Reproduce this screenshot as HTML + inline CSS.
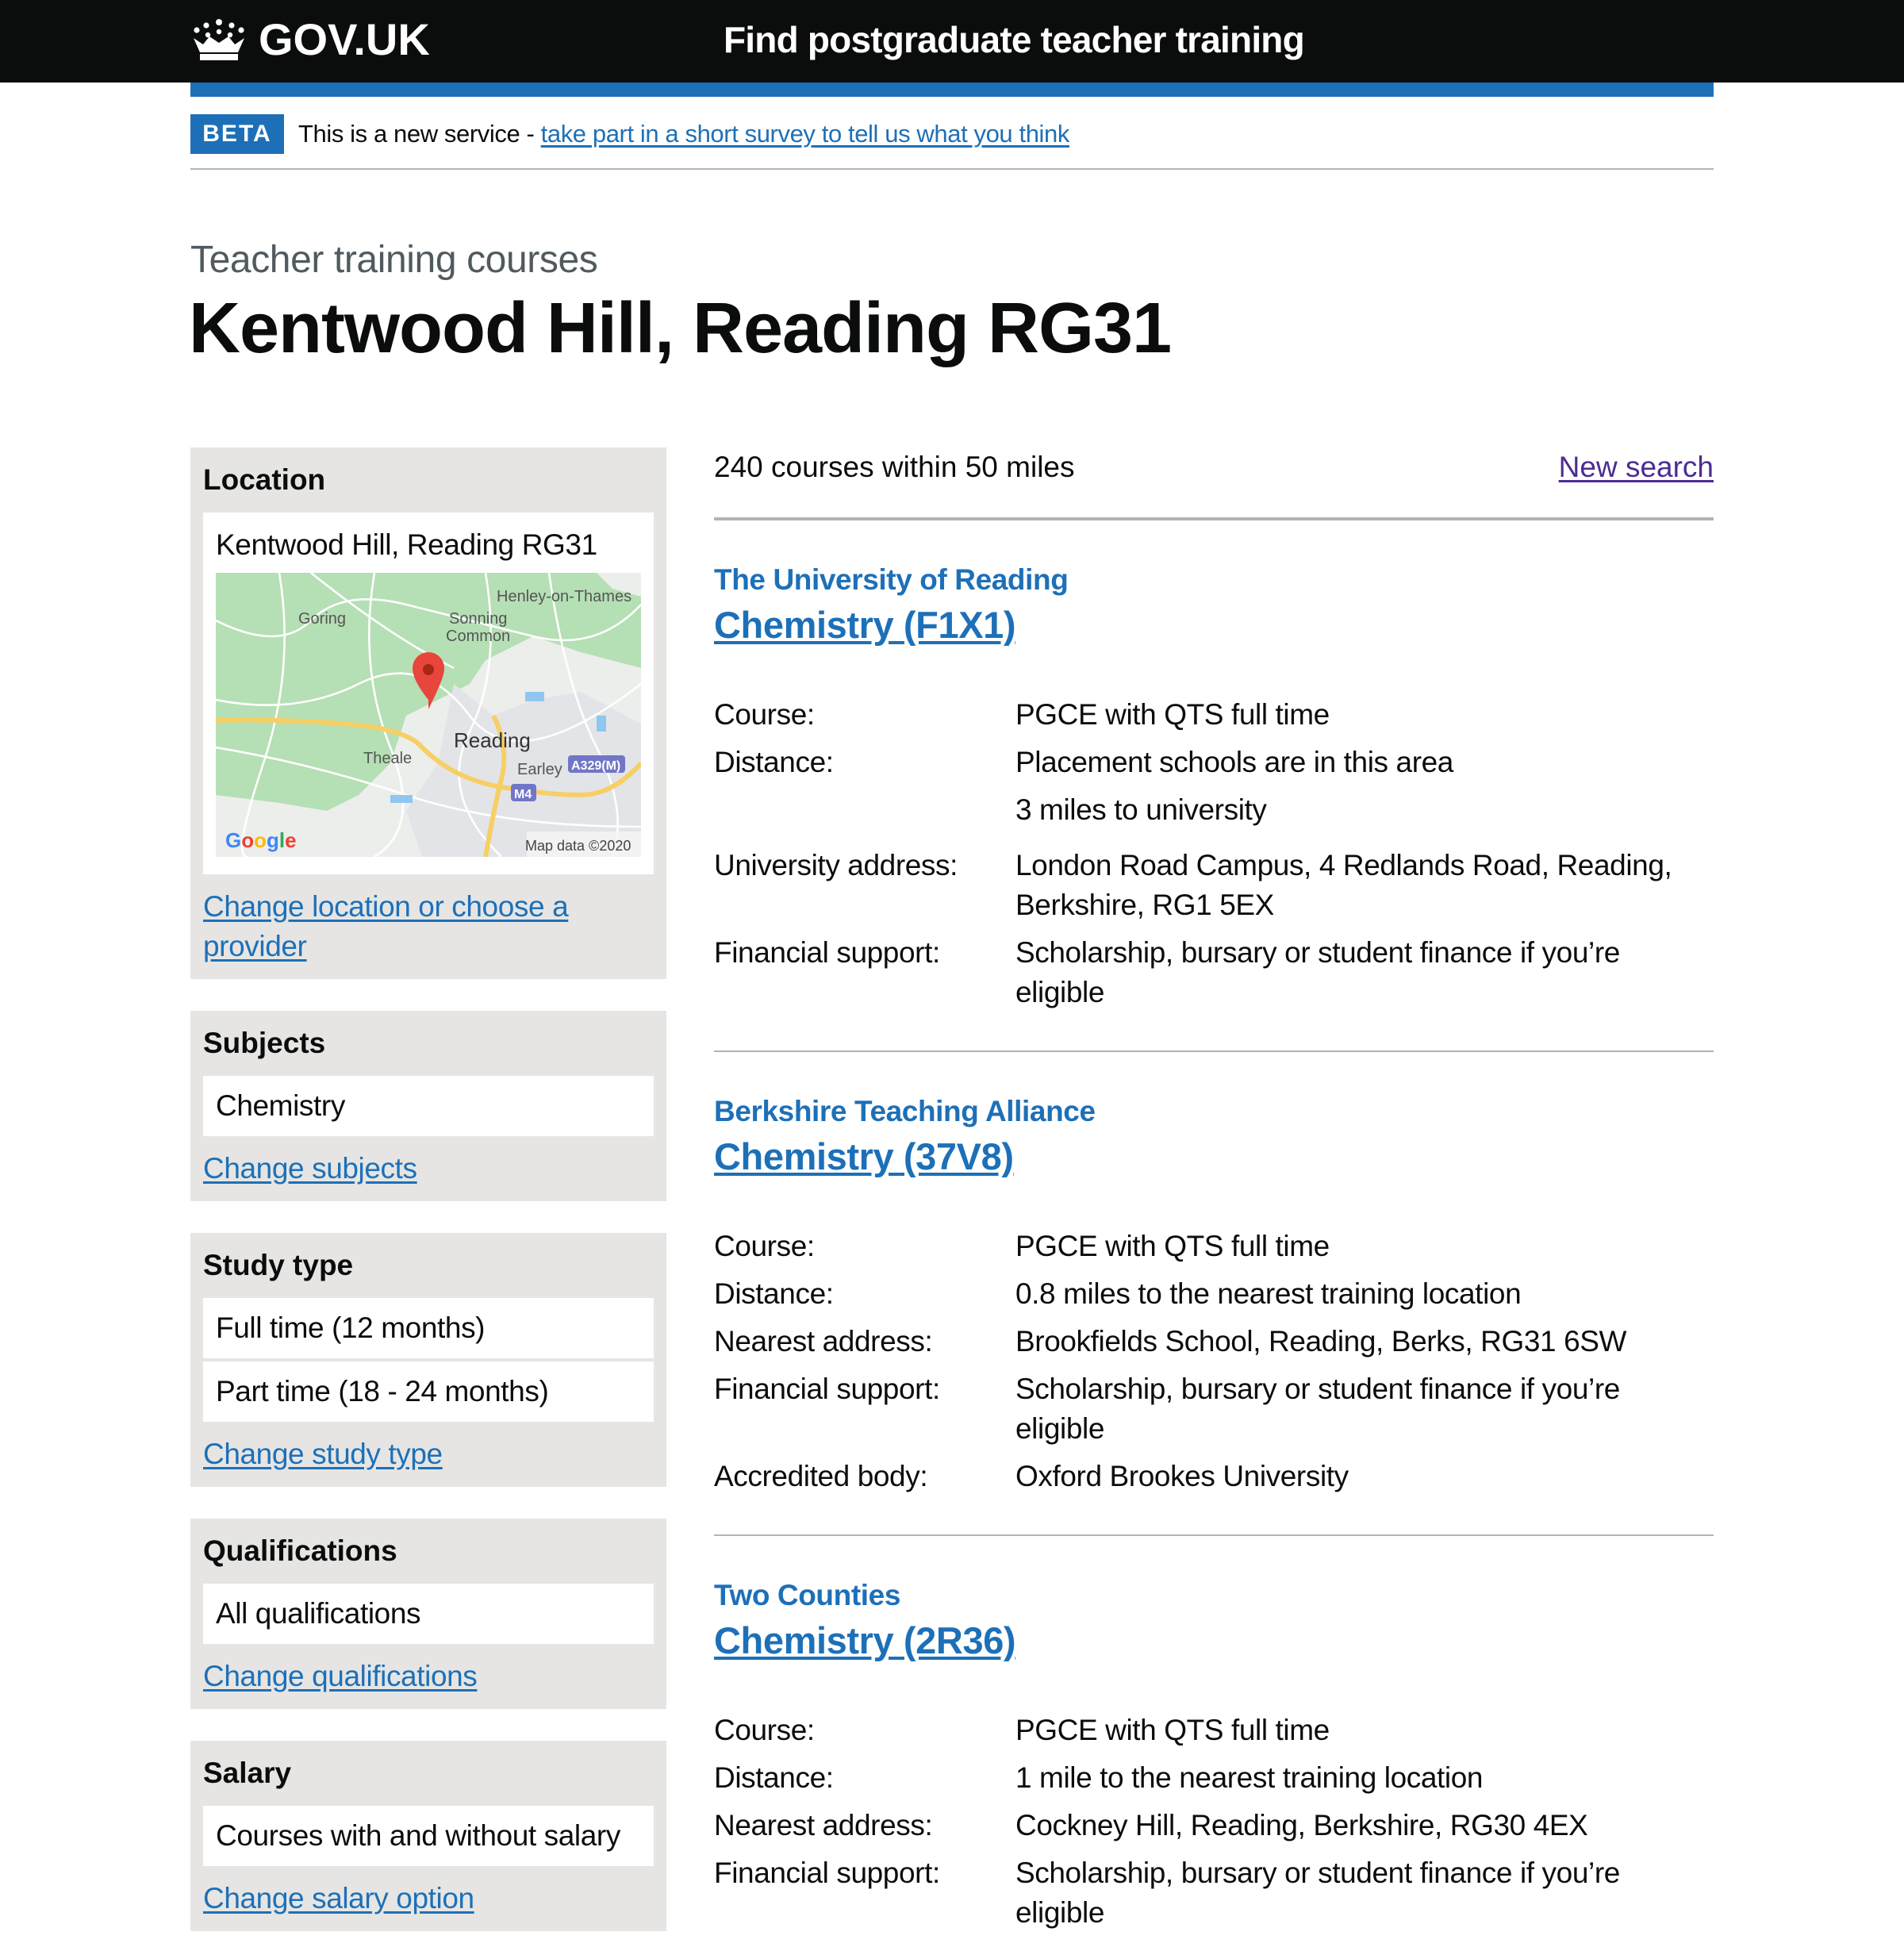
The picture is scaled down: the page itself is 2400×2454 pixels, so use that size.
<!DOCTYPE html>
<html><head><meta charset="utf-8">
<style>
html{zoom:2}
*{box-sizing:border-box;margin:0;padding:0}
body{width:1200px;height:1227px;overflow:hidden;background:#fff;font-family:"Liberation Sans",Arial,sans-serif;color:#0b0c0c;position:relative}
a{color:#1d70b8;text-decoration:underline;text-underline-offset:2px}
.hdr{position:absolute;left:0;top:0;width:1200px;height:52px;background:#0b0c0c}
.logo{position:absolute;left:120px;top:10px;color:#fff;font-weight:bold;font-size:28px;line-height:30px;display:flex;align-items:center}
.logo svg{margin-right:7px}
.svc{position:absolute;left:456px;top:10px;color:#fff;font-weight:bold;font-size:23px;line-height:30px;letter-spacing:-0.4px}
.bar{position:absolute;left:120px;top:52px;width:960px;height:9px;background:#1d70b8}
.beta{position:absolute;left:120px;top:72px;width:960px;height:35px;border-bottom:1px solid #b1b4b6;font-size:15.5px;line-height:25px;letter-spacing:-0.2px}
.tag{display:inline-block;background:#1d70b8;color:#fff;font-weight:bold;font-size:15px;letter-spacing:1px;width:59px;height:25px;text-align:center;line-height:25px;margin-right:9px;vertical-align:top}
.cap{position:absolute;left:120px;top:149px;font-size:24px;line-height:30px;color:#505a5f;letter-spacing:-0.2px}
h1{position:absolute;left:119px;top:180px;font-size:45px;line-height:54px;font-weight:bold;letter-spacing:-0.5px}
.box{position:absolute;left:120px;width:300px;background:#e6e5e3;padding:0 8px}
.box h3{font-size:18.5px;font-weight:bold;line-height:25px;margin-top:8px}
.w{background:#fff;font-size:18.5px;line-height:25px;padding:0 8px;height:38px;display:flex;align-items:center;letter-spacing:-0.2px;white-space:nowrap}
.box a{font-size:18.5px;line-height:25px;display:block;letter-spacing:-0.2px}
.main{position:absolute;left:450px;width:630px}
.top{top:282px;height:45px;border-bottom:1px solid #b1b4b6;font-size:18.5px;line-height:25px}
.res{border-top:1px solid #b1b4b6;position:absolute;left:450px;width:630px}
.prov{color:#1d70b8;font-weight:bold;font-size:18.5px;line-height:25px;margin-top:25px;letter-spacing:-0.2px}
.ttl{font-weight:bold;font-size:23.5px;line-height:30px;margin-top:1px;letter-spacing:-0.2px}
dl{margin-top:29px;font-size:18.5px;line-height:25px;letter-spacing:-0.2px}
.r{display:flex;padding-bottom:5px}
.r dt{width:190px;flex:none}
.r dd p{margin-bottom:5px}
.r dd p:last-child{margin-bottom:0}
</style></head><body>
<div class="hdr">
 <div class="logo"><svg width="36" height="28" viewBox="0 0 36 28" fill="#fff">
  <circle cx="18" cy="3" r="2"/><circle cx="10" cy="5" r="1.8"/><circle cx="26" cy="5" r="1.8"/><circle cx="4" cy="8" r="1.8"/><circle cx="32" cy="8" r="1.8"/>
  <circle cx="18" cy="9" r="1.6"/><circle cx="11" cy="11" r="1.6"/><circle cx="25" cy="11" r="1.6"/>
  <path d="M2 13 L6 22 L30 22 L34 13 L28 17 L24 12 L18 16 L12 12 L8 17 Z"/>
  <rect x="6" y="23" width="24" height="4"/></svg>GOV.UK</div>
 <div class="svc">Find postgraduate teacher training</div>
</div>
<div class="bar"></div>
<div class="beta"><span class="tag">BETA</span>This is a new service - <a href="#">take part in a short survey to tell us what you think</a></div>
<div class="cap">Teacher training courses</div>
<h1>Kentwood Hill, Reading RG31</h1>

<div class="box" style="top:282px;height:335px">
 <h3>Location</h3>
 <div style="background:#fff;margin-top:8px;height:228px;padding:0 8px">
  <div style="font-size:18.5px;line-height:25px;padding-top:8px;height:38px;letter-spacing:-0.2px">Kentwood Hill, Reading RG31</div>
  <svg width="268" height="179" viewBox="0 0 268 179" style="display:block">
   <rect width="268" height="179" fill="#eceeec"/>
   <path d="M0 0 H240 L250 10 L268 15 V60 L230 50 L200 40 L170 55 L160 70 L140 80 L120 90 L110 120 L90 140 L70 150 L40 145 L0 140 Z" fill="#b5dfb5"/>
   <path d="M150 70 L175 90 L200 80 L230 75 L268 95 V179 H130 L120 150 L140 120 Z" fill="#e3e4e8"/>
   <g stroke="#fff" stroke-width="1.3" fill="none">
    <path d="M0 30 Q40 50 60 30 T120 20 T200 40 T268 20"/><path d="M0 80 Q50 90 90 70 T160 90 T268 70"/>
    <path d="M40 0 Q50 60 30 120 T20 179"/><path d="M100 0 Q90 60 110 110 T100 179"/><path d="M170 0 Q180 60 160 100 T180 179"/>
    <path d="M210 0 Q220 70 240 110 T250 179"/><path d="M0 110 Q60 120 120 140 T268 160"/><path d="M60 0 Q110 40 150 60"/>
   </g>
   <path d="M0 93 Q40 92 80 95 T130 110 Q150 130 180 135 T230 140 T268 120" stroke="#f6cf65" stroke-width="3" fill="none"/>
   <path d="M170 179 Q175 150 180 130 T175 90" stroke="#f6cf65" stroke-width="3" fill="none"/>
   <g fill="#90c6ef"><rect x="195" y="75" width="12" height="6"/><rect x="110" y="140" width="14" height="5"/><rect x="240" y="90" width="6" height="10"/></g>
   <path d="M134 80 C126 70 124 64 124 60 A10 10 0 1 1 144 60 C144 64 142 70 134 86 Z" fill="#e8453c"/>
   <circle cx="134" cy="61" r="3.5" fill="#a52714"/>
   <g font-family="Liberation Sans,sans-serif" fill="#555" font-size="10">
    <text x="177" y="18" font-size="10">Henley-on-Thames</text><text x="52" y="32">Goring</text>
    <text x="147" y="32">Sonning</text><text x="145" y="43">Common</text>
    <text x="150" y="110" font-size="13" fill="#333">Reading</text><text x="93" y="120">Theale</text><text x="190" y="127">Earley</text>
   </g>
   <rect x="222" y="115" width="36" height="11" rx="2" fill="#7176c7"/><text x="224" y="124" font-size="8" fill="#fff" font-family="Liberation Sans,sans-serif" font-weight="bold">A329(M)</text>
   <rect x="186" y="133" width="16" height="11" rx="2" fill="#7176c7"/><text x="188" y="142" font-size="8" fill="#fff" font-family="Liberation Sans,sans-serif" font-weight="bold">M4</text>
   <text x="6" y="173" font-size="13" font-family="Liberation Sans,sans-serif" font-weight="bold"><tspan fill="#4285f4">G</tspan><tspan fill="#ea4335">o</tspan><tspan fill="#fbbc05">o</tspan><tspan fill="#4285f4">g</tspan><tspan fill="#34a853">l</tspan><tspan fill="#ea4335">e</tspan></text>
   <rect x="196" y="163" width="72" height="16" fill="#f5f5f5" opacity=".8"/>
   <text x="195" y="175" font-size="9" fill="#444" font-family="Liberation Sans,sans-serif">Map data ©2020</text>
  </svg>
 </div>
 <a href="#" style="margin-top:8px">Change location or choose a provider</a>
</div>

<div class="box" style="top:637px;height:120px">
 <h3>Subjects</h3><div class="w" style="margin-top:8px">Chemistry</div><a href="#" style="margin-top:8px">Change subjects</a>
</div>
<div class="box" style="top:777px;height:160px">
 <h3>Study type</h3><div class="w" style="margin-top:8px">Full time (12 months)</div><div class="w" style="margin-top:2px">Part time (18 - 24 months)</div><a href="#" style="margin-top:8px">Change study type</a>
</div>
<div class="box" style="top:957px;height:120px">
 <h3>Qualifications</h3><div class="w" style="margin-top:8px">All qualifications</div><a href="#" style="margin-top:8px">Change qualifications</a>
</div>
<div class="box" style="top:1097px;height:120px">
 <h3>Salary</h3><div class="w" style="margin-top:8px">Courses with and without salary</div><a href="#" style="margin-top:8px">Change salary option</a>
</div>

<div class="main top" style="top:282px">
 <div style="position:absolute;top:0;left:0">240 courses within 50 miles</div>
 <a href="#" style="position:absolute;right:0;top:0;color:#4c2c92">New search</a>
</div>

<div class="res" style="top:327px">
 <div class="prov">The University of Reading</div>
 <div class="ttl"><a href="#">Chemistry (F1X1)</a></div>
 <dl>
  <div class="r"><dt>Course:</dt><dd>PGCE with QTS full time</dd></div>
  <div class="r"><dt>Distance:</dt><dd><p>Placement schools are in this area</p><p style="margin-bottom:5px">3 miles to university</p></dd></div>
  <div class="r"><dt>University address:</dt><dd>London Road Campus, 4 Redlands Road, Reading, Berkshire, RG1 5EX</dd></div>
  <div class="r"><dt>Financial support:</dt><dd>Scholarship, bursary or student finance if you’re eligible</dd></div>
 </dl>
</div>
<div class="res" style="top:662px">
 <div class="prov">Berkshire Teaching Alliance</div>
 <div class="ttl"><a href="#">Chemistry (37V8)</a></div>
 <dl>
  <div class="r"><dt>Course:</dt><dd>PGCE with QTS full time</dd></div>
  <div class="r"><dt>Distance:</dt><dd>0.8 miles to the nearest training location</dd></div>
  <div class="r"><dt>Nearest address:</dt><dd>Brookfields School, Reading, Berks, RG31 6SW</dd></div>
  <div class="r"><dt>Financial support:</dt><dd>Scholarship, bursary or student finance if you’re eligible</dd></div>
  <div class="r"><dt>Accredited body:</dt><dd>Oxford Brookes University</dd></div>
 </dl>
</div>
<div class="res" style="top:967px">
 <div class="prov">Two Counties</div>
 <div class="ttl"><a href="#">Chemistry (2R36)</a></div>
 <dl>
  <div class="r"><dt>Course:</dt><dd>PGCE with QTS full time</dd></div>
  <div class="r"><dt>Distance:</dt><dd>1 mile to the nearest training location</dd></div>
  <div class="r"><dt>Nearest address:</dt><dd>Cockney Hill, Reading, Berkshire, RG30 4EX</dd></div>
  <div class="r"><dt>Financial support:</dt><dd>Scholarship, bursary or student finance if you’re eligible</dd></div>
 </dl>
</div>
</body></html>
